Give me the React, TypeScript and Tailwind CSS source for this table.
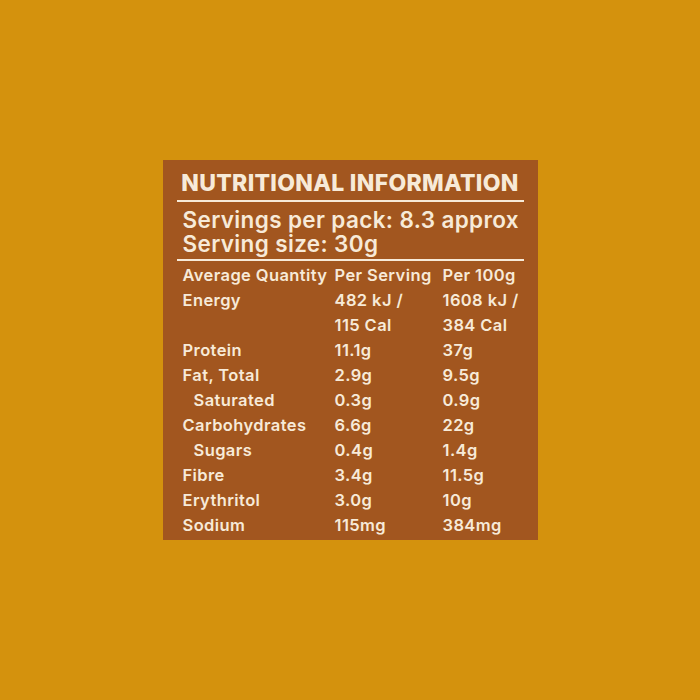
const rows: [string, string, string, boolean?][] = [
  ["Energy", "482 kJ /", "1608 kJ /"],
  ["", "115 Cal", "384 Cal"],
  ["Protein", "11.1g", "37g"],
  ["Fat, Total", "2.9g", "9.5g"],
  ["Saturated", "0.3g", "0.9g", true],
  ["Carbohydrates", "6.6g", "22g"],
  ["Sugars", "0.4g", "1.4g", true],
  ["Fibre", "3.4g", "11.5g"],
  ["Erythritol", "3.0g", "10g"],
  ["Sodium", "115mg", "384mg"],
];

export default function App() {
  return (
    <div className="w-[700px] h-[700px] bg-[#d4920d] flex items-center justify-center font-['Inter','Liberation_Sans',sans-serif] text-[#f7ead8]">
      <div className="w-[375px] h-[380px] bg-[#a2561f] px-[14px] pt-[9px]">
        <h1 className="text-[23px] font-extrabold tracking-[0.3px] text-center leading-[28px] pb-[3px] whitespace-nowrap">NUTRITIONAL INFORMATION</h1>
        <div className="h-[2px] bg-[#f7ead8]" />
        <div className="px-[6px] pt-[6px] pb-[3px] text-[22.5px] font-semibold leading-[24px] tracking-[0.36px] whitespace-nowrap">
          <p>Servings per pack: 8.3 approx</p>
          <p>Serving size: 30g</p>
        </div>
        <div className="h-[2px] bg-[#f7ead8]" />
        <div className="px-[6px] pt-[2px] text-[16.5px] font-semibold leading-[25px] tracking-[0.4px] whitespace-nowrap">
          <div className="grid grid-cols-[152px_108px_1fr]">
            <span>Average Quantity</span>
            <span>Per Serving</span>
            <span>Per 100g</span>
          </div>
          {rows.map(([n, a, b, sub], i) => (
            <div key={i} className="grid grid-cols-[152px_108px_1fr]">
              <span className={sub ? "pl-[11px]" : ""}>{n}</span>
              <span>{a}</span>
              <span>{b}</span>
            </div>
          ))}
        </div>
      </div>
    </div>
  );
}
